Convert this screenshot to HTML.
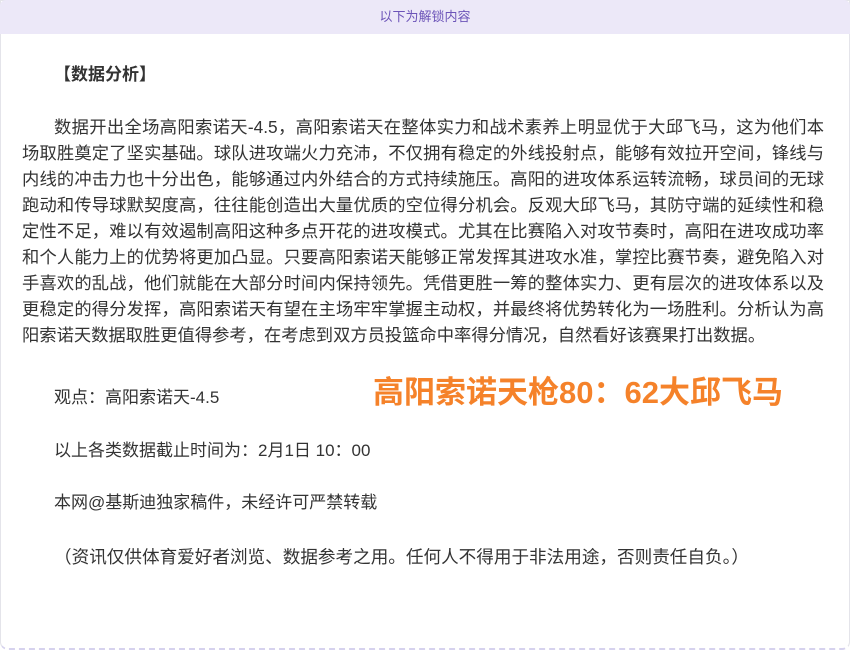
<!DOCTYPE html>
<html><head><meta charset="utf-8"><style>
html,body{margin:0;padding:0;background:#fff;width:850px;height:650px;overflow:hidden}
.box{position:absolute;left:0;top:0;border:1px solid #e4e4ea;border-bottom:2px dashed #d6d2ee;border-radius:0 0 8px 8px;box-sizing:border-box;width:850px;height:650px}
.hd{position:absolute;left:0;top:0;width:850px;height:34px;background:#ece8f8;color:#6c54b8;font:13px "Liberation Sans","Noto Sans CJK SC",sans-serif;text-align:center;line-height:34px;border-radius:6px 6px 0 0}
.t{position:absolute;font:17px/26px "Liberation Sans","Noto Sans CJK SC",sans-serif;color:#333;white-space:nowrap}
.p{left:22px;top:114px;width:802px;text-indent:32px;text-align:justify;white-space:normal;font-size:17.3px}
.sc{position:absolute;left:373px;top:373px;font:bold 31px/40px "Liberation Sans","Noto Sans CJK SC",sans-serif;color:#f5822a;white-space:nowrap}
</style></head><body>
<div class="box"></div>
<div class="hd">以下为解锁内容</div>
<div class="t" style="left:54px;top:62px;font-weight:bold">【数据分析】</div>
<div class="t p">数据开出全场高阳索诺天-4.5，高阳索诺天在整体实力和战术素养上明显优于大邱飞马，这为他们本场取胜奠定了坚实基础。球队进攻端火力充沛，不仅拥有稳定的外线投射点，能够有效拉开空间，锋线与内线的冲击力也十分出色，能够通过内外结合的方式持续施压。高阳的进攻体系运转流畅，球员间的无球跑动和传导球默契度高，往往能创造出大量优质的空位得分机会。反观大邱飞马，其防守端的延续性和稳定性不足，难以有效遏制高阳这种多点开花的进攻模式。尤其在比赛陷入对攻节奏时，高阳在进攻成功率和个人能力上的优势将更加凸显。只要高阳索诺天能够正常发挥其进攻水准，掌控比赛节奏，避免陷入对手喜欢的乱战，他们就能在大部分时间内保持领先。凭借更胜一筹的整体实力、更有层次的进攻体系以及更稳定的得分发挥，高阳索诺天有望在主场牢牢掌握主动权，并最终将优势转化为一场胜利。分析认为高阳索诺天数据取胜更值得参考，在考虑到双方员投篮命中率得分情况，自然看好该赛果打出数据。</div>
<div class="t" style="left:54px;top:385px">观点：高阳索诺天-4.5</div>
<div class="sc">高阳索诺天枪80：62大邱飞马</div>
<div class="t" style="left:54px;top:438px">以上各类数据截止时间为：2月1日 10：00</div>
<div class="t" style="left:54px;top:490px">本网@基斯迪独家稿件，未经许可严禁转载</div>
<div class="t" style="left:54px;top:544px;font-size:17.6px">（资讯仅供体育爱好者浏览、数据参考之用。任何人不得用于非法用途，否则责任自负。）</div>
</body></html>
